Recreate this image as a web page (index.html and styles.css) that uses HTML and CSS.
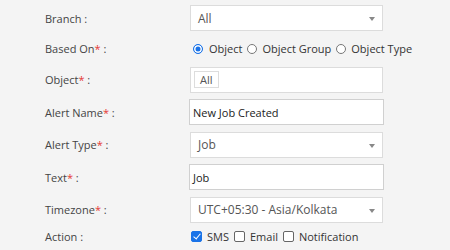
FILE: index.html
```html
<!DOCTYPE html>
<html lang="en">
<head>
    <meta charset="UTF-8">
    <title>Alert</title>
    <link rel="stylesheet" href="styles.css">
</head>
<body>
    <div class="form">
        <div class="row">
            <label class="label">Branch :</label>
            <div class="select">All<span class="arrow"></span></div>
        </div>
        <div class="row row-radio">
            <label class="label">Based On<span class="req">*</span> :</label>
            <div class="options">
                <span class="radio checked"></span><span class="opt">Object</span>
                <span class="radio"></span><span class="opt">Object Group</span>
                <span class="radio"></span><span class="opt">Object Type</span>
            </div>
        </div>
        <div class="row">
            <label class="label">Object<span class="req">*</span> :</label>
            <div class="tags"><span class="tag">All</span></div>
        </div>
        <div class="row">
            <label class="label">Alert Name<span class="req">*</span> :</label>
            <div class="input">New Job Created</div>
        </div>
        <div class="row">
            <label class="label">Alert Type<span class="req">*</span> :</label>
            <div class="select">Job<span class="arrow"></span></div>
        </div>
        <div class="row">
            <label class="label">Text<span class="req">*</span> :</label>
            <div class="input">Job</div>
        </div>
        <div class="row">
            <label class="label">Timezone<span class="req">*</span> :</label>
            <div class="select">UTC+05:30 - Asia/Kolkata<span class="arrow"></span></div>
        </div>
        <div class="row row-check">
            <label class="label">Action :</label>
            <div class="options">
                <span class="check checked"></span><span class="opt">SMS</span>
                <span class="check"></span><span class="opt">Email</span>
                <span class="check"></span><span class="opt">Notification</span>
            </div>
        </div>
    </div>
</body>
</html>
```

FILE: styles.css
```css
/* base */
body {
    margin: 0;
    background-color: #f4f4f4;
    font-family: "Open Sans", Arial, sans-serif;
    font-size: 11px;
    color: #444;
}

.form {
    padding: 5px 0 0 45px;
}

.row {
    display: flex;
    align-items: center;
    height: 26px;
    margin-bottom: 6.5px;
}

.row-radio {
    height: 22px;
    margin-top: 1px;
    margin-bottom: 7px;
}

.row-check {
    height: 16px;
    margin-top: -1px;
}

.label {
    width: 145px;
    flex-shrink: 0;
}

.req {
    color: #e53935;
}

/* fields */
.select, .input, .tags {
    box-sizing: border-box;
    height: 26px;
    background-color: #fff;
    display: flex;
    align-items: center;
}

.select {
    position: relative;
    width: 193px;
    border: 1px solid #dcdcdc;
    padding-left: 7px;
    font-size: 12px;
    color: #555;
}

.arrow {
    position: absolute;
    right: 7px;
    top: 11px;
    border-left: 3px solid transparent;
    border-right: 3px solid transparent;
    border-top: 4px solid #888;
}

.input {
    width: 195px;
    margin-left: -1px;
    border: 1px solid #d0d0d0;
    padding-left: 3px;
    color: #222;
}

.tags {
    width: 193px;
    border: 1px solid #dcdcdc;
    padding-left: 3px;
}

.tag {
    border: 1px solid #ddd;
    padding: 0 5px;
    line-height: 15px;
    color: #555;
}

/* radios and checkboxes */
.options {
    display: flex;
    align-items: center;
    color: #333;
}

.radio {
    box-sizing: border-box;
    width: 10px;
    height: 10px;
    border-radius: 50%;
    border: 1px solid #777;
    background-color: #fff;
    margin: 0 5px 0 5px;
}

.radio:first-child {
    margin-left: 3px;
    margin-right: 6px;
}

.radio.checked {
    border: 1.5px solid #1a73e8;
    background-color: #1a73e8;
    box-shadow: inset 0 0 0 1.5px #fff;
}

.check {
    box-sizing: border-box;
    width: 11px;
    height: 11px;
    border: 1px solid #666;
    border-radius: 2px;
    background-color: #fff;
    margin: 0 5px 0 5px;
    position: relative;
}

.check:first-child {
    margin-left: 1px;
}

.check.checked {
    border-color: #1a73e8;
    background-color: #1a73e8;
}

.check.checked::after {
    content: "";
    position: absolute;
    left: 3px;
    top: 0px;
    width: 3px;
    height: 6px;
    border-right: 1.5px solid #fff;
    border-bottom: 1.5px solid #fff;
    transform: rotate(40deg);
}
```
